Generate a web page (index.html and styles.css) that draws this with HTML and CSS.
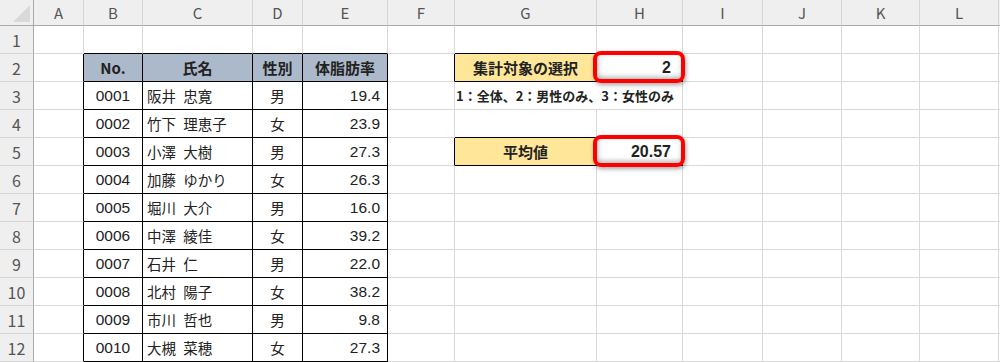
FILE: index.html
```html
<!DOCTYPE html>
<html lang="ja">
<head>
<meta charset="utf-8">
<link rel="stylesheet" href="styles.css">
</head>
<body>
<div class="sheet">
  <div class="ch corner"><div class="tri"></div></div>
  <div class="ch">A</div><div class="ch">B</div><div class="ch">C</div><div class="ch">D</div><div class="ch">E</div><div class="ch">F</div><div class="ch">G</div><div class="ch">H</div><div class="ch">I</div><div class="ch">J</div><div class="ch">K</div><div class="ch">L</div><div class="ch last"></div>

  <div class="rh">1</div>
  <div class="c"></div><div class="c bb"></div><div class="c bb"></div><div class="c bb"></div><div class="c bb"></div><div class="c"></div><div class="c bb"></div><div class="c"></div><div class="c"></div><div class="c"></div><div class="c"></div><div class="c"></div><div class="c last"></div>

  <div class="rh">2</div>
  <div class="c br"></div><div class="c tb th">No.</div><div class="c tb th">氏名</div><div class="c tb th">性別</div><div class="c tb th">体脂肪率</div><div class="c br"></div><div class="c tb lab">集計対象の選択</div><div class="c tb val">2<span class="mark"></span></div><div class="c"></div><div class="c"></div><div class="c"></div><div class="c"></div><div class="c last"></div>

  <div class="rh">3</div>
  <div class="c br"></div><div class="c tb ctr num">0001</div><div class="c tb l">阪井 忠寛</div><div class="c tb ctr">男</div><div class="c tb r num">19.4</div><div class="c"></div><div class="c note">1：全体、2：男性のみ、3：女性のみ</div><div class="c"></div><div class="c"></div><div class="c"></div><div class="c"></div><div class="c last"></div>

  <div class="rh">4</div>
  <div class="c br"></div><div class="c tb ctr num">0002</div><div class="c tb l">竹下 理恵子</div><div class="c tb ctr">女</div><div class="c tb r num">23.9</div><div class="c"></div><div class="c bb"></div><div class="c"></div><div class="c"></div><div class="c"></div><div class="c"></div><div class="c"></div><div class="c last"></div>

  <div class="rh">5</div>
  <div class="c br"></div><div class="c tb ctr num">0003</div><div class="c tb l">小澤 大樹</div><div class="c tb ctr">男</div><div class="c tb r num">27.3</div><div class="c br"></div><div class="c tb lab">平均値</div><div class="c tb val">20.57<span class="mark"></span></div><div class="c"></div><div class="c"></div><div class="c"></div><div class="c"></div><div class="c last"></div>

  <div class="rh">6</div>
  <div class="c br"></div><div class="c tb ctr num">0004</div><div class="c tb l">加藤 ゆかり</div><div class="c tb ctr">女</div><div class="c tb r num">26.3</div><div class="c"></div><div class="c"></div><div class="c"></div><div class="c"></div><div class="c"></div><div class="c"></div><div class="c"></div><div class="c last"></div>

  <div class="rh">7</div>
  <div class="c br"></div><div class="c tb ctr num">0005</div><div class="c tb l">堀川 大介</div><div class="c tb ctr">男</div><div class="c tb r num">16.0</div><div class="c"></div><div class="c"></div><div class="c"></div><div class="c"></div><div class="c"></div><div class="c"></div><div class="c"></div><div class="c last"></div>

  <div class="rh">8</div>
  <div class="c br"></div><div class="c tb ctr num">0006</div><div class="c tb l">中澤 綾佳</div><div class="c tb ctr">女</div><div class="c tb r num">39.2</div><div class="c"></div><div class="c"></div><div class="c"></div><div class="c"></div><div class="c"></div><div class="c"></div><div class="c"></div><div class="c last"></div>

  <div class="rh">9</div>
  <div class="c br"></div><div class="c tb ctr num">0007</div><div class="c tb l">石井 仁</div><div class="c tb ctr">男</div><div class="c tb r num">22.0</div><div class="c"></div><div class="c"></div><div class="c"></div><div class="c"></div><div class="c"></div><div class="c"></div><div class="c"></div><div class="c last"></div>

  <div class="rh">10</div>
  <div class="c br"></div><div class="c tb ctr num">0008</div><div class="c tb l">北村 陽子</div><div class="c tb ctr">女</div><div class="c tb r num">38.2</div><div class="c"></div><div class="c"></div><div class="c"></div><div class="c"></div><div class="c"></div><div class="c"></div><div class="c"></div><div class="c last"></div>

  <div class="rh">11</div>
  <div class="c br"></div><div class="c tb ctr num">0009</div><div class="c tb l">市川 哲也</div><div class="c tb ctr">男</div><div class="c tb r num">9.8</div><div class="c"></div><div class="c"></div><div class="c"></div><div class="c"></div><div class="c"></div><div class="c"></div><div class="c"></div><div class="c last"></div>

  <div class="rh">12</div>
  <div class="c br"></div><div class="c tb ctr num">0010</div><div class="c tb l">大槻 菜穂</div><div class="c tb ctr">女</div><div class="c tb r num">27.3</div><div class="c"></div><div class="c"></div><div class="c"></div><div class="c"></div><div class="c"></div><div class="c"></div><div class="c"></div><div class="c last"></div>
</div>
</body>
</html>
```

FILE: styles.css
```css
html, body {
  margin: 0;
  padding: 0;
  background: #fff;
}
body {
  width: 1000px;
  height: 362px;
  overflow: hidden;
  font-family: "Noto Sans CJK JP", "Noto Sans", sans-serif;
  color: #222;
}
.sheet {
  display: grid;
  grid-template-columns: 34px 50px 59px 110px 50px 85px 67px 142px 86px 80px 79px 78px 79px 1fr;
  grid-template-rows: 26px repeat(12, 28px);
}
.ch {
  background: #efefef;
  border-right: 1px solid #d6d6d6;
  border-bottom: 1px solid #a9a9a9;
  color: #555;
  font-size: 15px;
  display: flex;
  align-items: center;
  justify-content: center;
  line-height: 1;
  padding-bottom: 1px;
  box-sizing: border-box;
}
.corner {
  border-right: 1px solid #a9a9a9;
  align-items: flex-end;
  justify-content: flex-end;
  padding: 0 3px 3px 0;
}
.tri {
  width: 17px;
  height: 17px;
  background: #d9d9d9;
  clip-path: polygon(100% 0, 100% 100%, 0 100%);
}
.rh {
  background: #efefef;
  border-right: 1px solid #a9a9a9;
  border-bottom: 1px solid #d6d6d6;
  color: #555;
  font-size: 16px;
  display: flex;
  align-items: center;
  justify-content: center;
  box-sizing: border-box;
}
.c {
  border-right: 1px solid #d9d9d9;
  border-bottom: 1px solid #d9d9d9;
  box-sizing: border-box;
  font-size: 14.5px;
  display: flex;
  align-items: center;
  white-space: nowrap;
  min-width: 0;
}
.num {
  font-family: "Liberation Sans", "Noto Sans CJK JP", sans-serif;
  font-size: 15.5px;
  padding-top: 1px;
}
.last { border-right: none; }
.bb { border-bottom-color: #000; }
.br { border-right-color: #000; }
.tb { border-right-color: #000; border-bottom-color: #000; }
.th {
  background: #acb9ca;
  font-weight: bold;
  font-size: 15px;
  justify-content: center;
}
.ctr { justify-content: center; }
.l { justify-content: flex-start; padding-left: 4px; word-spacing: 4px; }
.r { justify-content: flex-end; padding-right: 7px; }
.lab {
  background: #ffe699;
  font-weight: bold;
  font-size: 15px;
  justify-content: center;
}
.val {
  position: relative;
  justify-content: flex-end;
  padding-right: 11px;
  font-family: "Liberation Sans", "Noto Sans CJK JP", sans-serif;
  font-weight: bold;
  font-size: 16px;
  padding-top: 1px;
}
.mark {
  position: absolute;
  left: -4px;
  right: -3px;
  top: -3px;
  bottom: -2px;
  border: 4px solid #f00;
  border-radius: 8px;
  box-shadow: 1px 2px 4px rgba(0, 0, 0, 0.35), inset 1px -2px 5px rgba(0, 0, 0, 0.3);
}
.note {
  grid-column: span 2;
  font-size: 13px;
  font-weight: bold;
  padding-left: 1px;
}
```
